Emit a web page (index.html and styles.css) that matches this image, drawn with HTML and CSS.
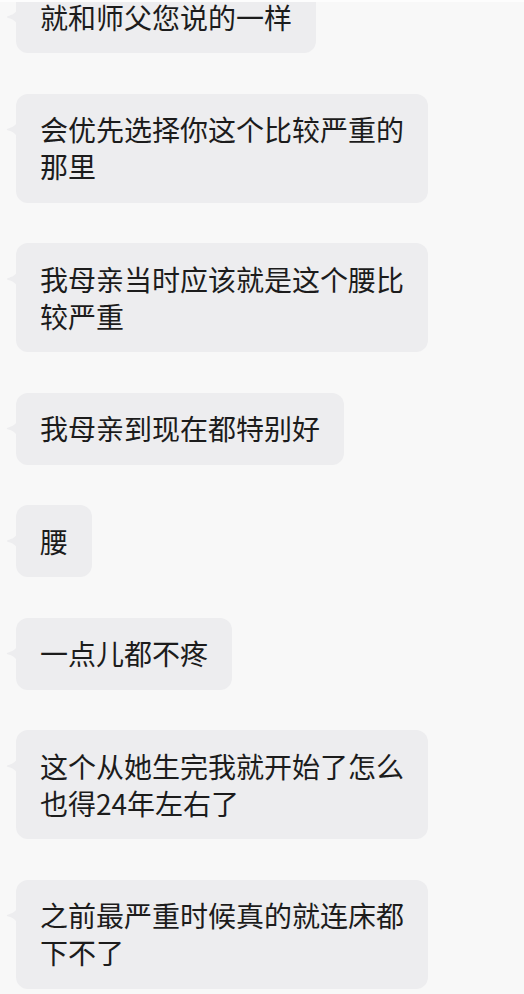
FILE: index.html
```html
<!DOCTYPE html>
<html>
<head>
  <title>聊天记录</title>
  <meta charset="UTF-8"/>
  <link rel="stylesheet" href="styles.css">
</head>
<body>

  <div class="top-strip"></div>

  <div class="chat">
    <div class="messages">
      <div class="bubble">就和师父您说的一样</div>
      <div class="bubble">会优先选择你这个比较严重的那里</div>
      <div class="bubble">我母亲当时应该就是这个腰比较严重</div>
      <div class="bubble">我母亲到现在都特别好</div>
      <div class="bubble">腰</div>
      <div class="bubble">一点儿都不疼</div>
      <div class="bubble">这个从她生完我就开始了怎么也得24年左右了</div>
      <div class="bubble">之前最严重时候真的就连床都下不了</div>
    </div>
  </div>

</body>
</html>
```

FILE: styles.css
```css
body {
  margin: 0;
  background-color: #f8f8f8;
  font-family: "Noto Sans CJK SC", "Noto Sans", sans-serif;
}

.top-strip {
  height: 2px;
  background-color: #fdfdfd;
}

.chat {
  height: 992px;
  overflow: hidden;
}

.messages {
  display: flex;
  flex-direction: column;
  align-items: flex-start;
  gap: 40.5px;
  margin-top: -21px;
  padding-left: 16px;
}

.bubble {
  position: relative;
  max-width: 364px;
  padding: 17.5px 24px;
  background-color: #ededef;
  border-radius: 12px;
  color: #1c1c1c;
  font-size: 28px;
  line-height: 37px;
}

/* little tail on the left side */
.bubble::before {
  content: "";
  position: absolute;
  left: -10px;
  top: 27px;
  width: 11px;
  height: 18px;
  background-color: #ededef;
  clip-path: path("M11 0 C11 5 6 7 1.5 8.2 Q0 9 1.5 9.8 C6 11 11 13 11 18 Z");
}
```
